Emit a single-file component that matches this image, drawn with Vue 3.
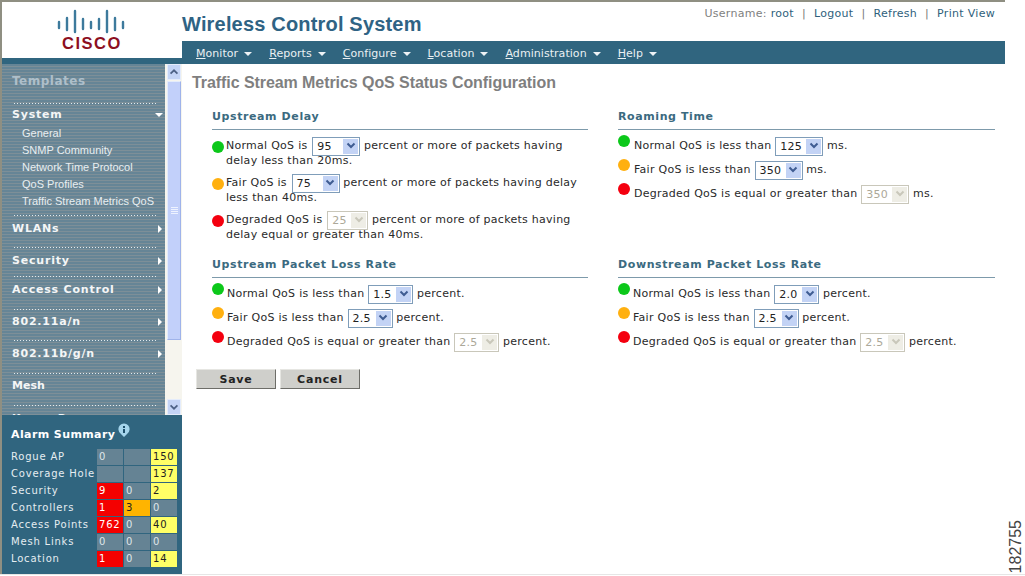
<script setup>
const navItems = ['Monitor', 'Reports', 'Configure', 'Location', 'Administration', 'Help']
const subItems = ['General', 'SNMP Community', 'Network Time Protocol', 'QoS Profiles', 'Traffic Stream Metrics QoS']
const groups = [
  { label: 'WLANs', h: 32, p: 6, arrow: true },
  { label: 'Security', h: 29, p: 6, arrow: true },
  { label: 'Access Control', h: 33, p: 6, arrow: true },
  { label: '802.11a/n', h: 31, p: 5, arrow: true },
  { label: '802.11b/g/n', h: 33, p: 6, arrow: true },
  { label: 'Mesh', h: 32, p: 5, arrow: false, plain: true },
  { label: 'Known Rogues', h: 32, p: 6, arrow: false, plain: true }
]
const alarms = [
  { name: 'Rogue AP', cells: [['0', 'g'], ['', 'g'], ['150', 'y']] },
  { name: 'Coverage Hole', cells: [['', 'g'], ['', 'g'], ['137', 'y']] },
  { name: 'Security', cells: [['9', 'r'], ['0', 'g'], ['2', 'y']] },
  { name: 'Controllers', cells: [['1', 'r'], ['3', 'o'], ['0', 'g']] },
  { name: 'Access Points', cells: [['762', 'r'], ['0', 'g'], ['40', 'y']] },
  { name: 'Mesh Links', cells: [['0', 'g'], ['0', 'g'], ['0', 'g']] },
  { name: 'Location', cells: [['1', 'r'], ['0', 'g'], ['14', 'y']] }
]
const sections = [
  {
    title: 'Upstream Delay', kind: 'wrap', rows: [
      { c: 'green', a: 'Normal QoS is', v: '95', w: 48, b: 'percent or more of packets having', b2: 'delay less than 20ms.' },
      { c: 'amber', a: 'Fair QoS is', v: '75', w: 48, b: 'percent or more of packets having delay', b2: 'less than 40ms.' },
      { c: 'red', a: 'Degraded QoS is', v: '25', w: 41, off: true, b: 'percent or more of packets having', b2: 'delay equal or greater than 40ms.' }
    ]
  },
  {
    title: 'Roaming Time', kind: 'line wide', rows: [
      { c: 'green', a: 'Normal QoS is less than', v: '125', w: 48, b: 'ms.' },
      { c: 'amber', a: 'Fair QoS is less than', v: '350', w: 48, b: 'ms.' },
      { c: 'red', a: 'Degraded QoS is equal or greater than', v: '350', w: 48, off: true, b: 'ms.' }
    ]
  },
  {
    title: 'Upstream Packet Loss Rate', kind: 'line', rows: [
      { c: 'green', a: 'Normal QoS is less than', v: '1.5', w: 45, b: 'percent.' },
      { c: 'amber', a: 'Fair QoS is less than', v: '2.5', w: 45, b: 'percent.' },
      { c: 'red', a: 'Degraded QoS is equal or greater than', v: '2.5', w: 45, off: true, b: 'percent.' }
    ]
  },
  {
    title: 'Downstream Packet Loss Rate', kind: 'line', rows: [
      { c: 'green', a: 'Normal QoS is less than', v: '2.0', w: 45, b: 'percent.' },
      { c: 'amber', a: 'Fair QoS is less than', v: '2.5', w: 45, b: 'percent.' },
      { c: 'red', a: 'Degraded QoS is equal or greater than', v: '2.5', w: 45, off: true, b: 'percent.' }
    ]
  }
]
const logoBars = [
  [59, 22, 28], [67, 18, 30], [75, 11, 32], [83, 19, 29], [91, 22, 28],
  [99, 19, 29], [107, 11, 32], [115, 18, 30], [123, 22, 28]
]
</script>

<template>
  <div class="page">
    <div class="shell">
      <aside class="left">
        <div class="logo">
          <svg class="bars" width="130" height="34" viewBox="0 0 130 34">
            <line v-for="b in logoBars" :key="b[0]" :x1="b[0]" :x2="b[0]" :y1="b[1]" :y2="b[2]" />
          </svg>
          <div class="cisco">CISCO</div>
        </div>
        <div class="strip"></div>
        <div class="side">
          <div class="menu">
            <div class="templates">Templates</div>
            <div class="dots"></div>
            <div class="system">
              <div class="head">System<i class="tri-down"></i></div>
              <div v-for="s in subItems" :key="s" class="sub">{{ s }}</div>
            </div>
            <div v-for="g in groups" :key="g.label" class="group" :style="{ height: g.h + 'px' }">
              <div class="dots"></div>
              <div class="head" :class="{ plain: g.plain }" :style="{ marginTop: g.p + 'px' }">
                {{ g.label }}<i v-if="g.arrow" class="tri-right"></i>
              </div>
            </div>
          </div>
          <div class="scroll">
            <div class="sbtn">
              <svg width="14" height="14" viewBox="0 0 14 14"><path d="M3 9 L7 5 L11 9" /></svg>
            </div>
            <div class="thumb"><span></span><span></span><span></span><span></span></div>
            <div class="track"></div>
            <div class="sbtn">
              <svg width="14" height="14" viewBox="0 0 14 14"><path d="M3 5 L7 9 L11 5" /></svg>
            </div>
          </div>
        </div>
        <div class="alarm">
          <div class="alarm-title">
            Alarm Summary
            <svg class="info" width="14" height="15" viewBox="0 0 14 15">
              <path d="M7 14 L3.5 10.5 A5.6 5.6 0 1 1 10.5 10.5 Z" fill="#a5d5ec" />
              <rect x="6" y="3" width="2" height="2" fill="#1d4f6b" />
              <rect x="6" y="6" width="2" height="4" fill="#1d4f6b" />
            </svg>
          </div>
          <div v-for="a in alarms" :key="a.name" class="alarm-row">
            <span class="alarm-name">{{ a.name }}</span>
            <span v-for="(c, i) in a.cells" :key="i" class="cell" :class="c[1]">{{ c[0] }}</span>
          </div>
        </div>
      </aside>

      <div class="right">
        <div class="top">
          <div class="brand">Wireless Control System</div>
          <div class="links">
            <span class="muted">Username:</span> <a>root</a>
            <b>|</b><a>Logout</a><b>|</b><a>Refresh</a><b>|</b><a>Print View</a>
          </div>
        </div>
        <nav class="nav">
          <span v-for="n in navItems" :key="n" class="nav-item">
            <span><u>{{ n[0] }}</u>{{ n.slice(1) }}</span><i class="tri-down small"></i>
          </span>
        </nav>
        <main class="main">
          <h1>Traffic Stream Metrics QoS Status Configuration</h1>
          <div class="grid">
            <section v-for="s in sections" :key="s.title" :class="s.kind">
              <h2>{{ s.title }}</h2>
              <div class="rows">
                <div v-for="r in s.rows" :key="r.c" class="row">
                  <span class="dot" :class="r.c"></span>
                  <div class="txt">
                    {{ r.a }}
                    <span class="sel" :class="{ off: r.off }" :style="{ width: r.w + 'px' }">
                      <span class="val">{{ r.v }}</span>
                      <span class="arr">
                        <svg width="10" height="8" viewBox="0 0 10 8"><path d="M1.5 1.5 L5 5 L8.5 1.5" /></svg>
                      </span>
                    </span>
                    {{ r.b }}<template v-if="r.b2"><br />{{ r.b2 }}</template>
                  </div>
                </div>
              </div>
            </section>
          </div>
          <div class="actions">
            <button type="button">Save</button>
            <button type="button">Cancel</button>
          </div>
        </main>
      </div>
    </div>
    <div class="foot"></div>
    <div class="figno">182755</div>
  </div>
</template>

<style>
html, body { margin: 0; background: #fff; }
</style>

<style scoped>
.page {
  position: relative;
  width: 1025px;
  height: 576px;
  overflow: hidden;
  background: #fff;
  font-family: "DejaVu Sans", Verdana, sans-serif;
  font-size: 11px;
  color: #2a2a2a;
}
.shell {
  display: flex;
  width: 1005px;
  height: 574px;
  border-top: 2px solid #8f8f82;
  box-sizing: border-box;
}
.foot { height: 1px; background: #e6e6e6; }
.left {
  width: 182px;
  flex: none;
  border-left: 2px solid #8f8f82;
  box-sizing: border-box;
  display: flex;
  flex-direction: column;
}
.logo { height: 56px; position: relative; display: flex; flex-direction: column; align-items: center; }
.bars { position: absolute; left: -2px; top: -2px; }
.bars line { stroke: #3d7a9c; stroke-width: 2.4; stroke-linecap: round; }
.cisco {
  margin-top: 32px;
  font-family: "Liberation Sans", Arial, sans-serif;
  font-weight: 700;
  font-size: 16.5px;
  line-height: 18px;
  letter-spacing: 1.5px;
  color: #8d0f1f;
}
.strip { height: 6px; background: #30657f; }
.side { height: 351px; display: flex; overflow: hidden; }
.menu {
  width: 163px;
  flex: none;
  overflow: hidden;
  background: repeating-linear-gradient(180deg, #668596 0 2px, #7d8f98 2px 3px);
  color: #fff;
  padding: 0 0 0 10px;
  box-sizing: border-box;
}
.templates {
  padding-top: 9px;
  height: 39px;
  font-weight: 700;
  font-size: 12px;
  line-height: 16px;
  letter-spacing: .5px;
  color: #aebfca;
  box-sizing: border-box;
}
.dots {
  height: 1px;
  width: 143px;
  margin-left: 2px;
  background: repeating-linear-gradient(90deg, #e3ebef 0 1px, transparent 1px 3px);
}
.system { height: 111px; padding-top: 4px; box-sizing: border-box; }
.head {
  position: relative;
  height: 14px;
  line-height: 14px;
  font-weight: 700;
  font-size: 11px;
  letter-spacing: .8px;
  color: #f4f6f7;
}
.head.plain { letter-spacing: 0; }
.sub {
  margin-left: 10px;
  height: 17px;
  line-height: 17px;
  font-family: "Liberation Sans", Arial, sans-serif;
  font-size: 11px;
  color: #e8eef1;
  white-space: nowrap;
}
.system .head { margin-bottom: 3px; }
.tri-right {
  position: absolute;
  left: 146px;
  top: 3px;
  border-left: 4px solid #fff;
  border-top: 4px solid transparent;
  border-bottom: 4px solid transparent;
}
.tri-down {
  position: absolute;
  left: 143px;
  top: 5px;
  border-top: 4px solid #fff;
  border-left: 4px solid transparent;
  border-right: 4px solid transparent;
}
.tri-down.small {
  position: static;
  display: inline-block;
  margin-left: 6px;
  vertical-align: 1px;
  border-top-color: #eef3f6;
}
.scroll {
  width: 17px;
  flex: none;
  padding: 0 1px 0 2px;
  box-sizing: border-box;
  display: flex;
  flex-direction: column;
  background: #f6f5ee;
}
.sbtn {
  height: 16px;
  background: #c4d4f6;
  border: 1px solid #e4ecfb;
  box-sizing: border-box;
  display: flex;
  align-items: center;
  justify-content: center;
}
.sbtn path { fill: none; stroke: #4d6185; stroke-width: 2; }
.thumb {
  height: 259px;
  margin-top: 1px;
  background: #c2d0fa;
  border: 1px solid #9fb3ea;
  border-top-color: #e4ecfb;
  border-left-color: #e4ecfb;
  box-sizing: border-box;
  display: flex;
  flex-direction: column;
  justify-content: center;
  align-items: center;
  gap: 1px;
}
.thumb span { width: 7px; height: 1px; background: #eef3ff; }
.track { flex: 1; }
.alarm {
  height: 159px;
  background: #30657f;
  padding: 11px 0 0 9px;
  box-sizing: border-box;
  width: 180px;
}
.alarm-title {
  position: relative;
  height: 23px;
  line-height: 18px;
  font-weight: 700;
  font-size: 11px;
  letter-spacing: .4px;
  color: #fff;
}
.info { position: absolute; left: 106px; top: -3px; }
.alarm-row { display: flex; height: 17px; gap: 1px; }
.alarm-name {
  width: 85px;
  line-height: 16px;
  font-size: 10px;
  letter-spacing: .8px;
  color: #e6edf1;
  white-space: nowrap;
}
.cell {
  width: 26px;
  height: 16px;
  line-height: 16px;
  padding-left: 2px;
  box-sizing: border-box;
  font-size: 10px;
  letter-spacing: .8px;
}
.cell.g { background: #658394; color: #dfe6ea; }
.cell.r { background: #f40000; color: #fff; }
.cell.y { background: #ffff66; color: #222; }
.cell.o { background: #ffb400; color: #222; }

.right { flex: 1; display: flex; flex-direction: column; min-width: 0; }
.top { height: 39px; display: flex; justify-content: space-between; }
.brand {
  font-family: "Liberation Sans", Arial, sans-serif;
  font-weight: 700;
  font-size: 20px;
  letter-spacing: .18px;
  line-height: 24px;
  padding-top: 10px;
  color: #2f6384;
}
.links {
  padding: 5px 10px 0 0;
  line-height: 14px;
  letter-spacing: .3px;
  color: #2f5f7c;
  white-space: nowrap;
}
.links .muted { color: #7f7f7f; }
.links b { font-weight: 400; color: #777; margin: 0 8px; }
.nav {
  height: 23px;
  background: #30657f;
  display: flex;
  padding: 1px 0 0 14px;
  box-sizing: border-box;
  align-items: center;
  color: #eaf0f3;
  letter-spacing: .05px;
}
.nav-item { margin-right: 17px; white-space: nowrap; }
.main { flex: 1; padding: 10px 0 0 10px; }
h1 {
  margin: 0;
  font-family: "Liberation Sans", Arial, sans-serif;
  font-size: 16px;
  line-height: 18px;
  font-weight: 700;
  letter-spacing: -.07px;
  color: #7f7f7f;
}
.grid {
  margin: 16px 10px 0 20px;
  display: grid;
  grid-template-columns: 376px 377px;
  column-gap: 30px;
  row-gap: 14px;
}
section { min-width: 0; }
h2 {
  margin: 0;
  line-height: 18px;
  box-sizing: border-box;
  border-bottom: 1px solid #7d9aab;
  height: 22px;
  font-size: 11px;
  font-weight: 700;
  letter-spacing: .6px;
  color: #3b6a80;
}
.rows { display: flex; flex-direction: column; }
.row { display: flex; letter-spacing: .27px; }
.dot { width: 12px; height: 12px; border-radius: 50%; flex: none; }
.dot.green { background: #0cc81a; }
.dot.amber { background: #ffb010; }
.dot.red { background: #f4000f; }
.wrap .rows { margin-top: 8px; gap: 7px; }
.wrap .row { line-height: 15px; }
.wrap .dot { margin: 3px 2px 0 0; }
.wrap .sel { margin-left: 1px; }
.line .rows { margin-top: 4px; }
.line .row { height: 24px; line-height: 24px; }
.line .dot { margin: 1px 3px 0 0; }
.line.wide .dot { margin-right: 4px; }
.txt { flex: 1; min-width: 0; white-space: nowrap; }
.sel {
  display: inline-flex;
  height: 19px;
  margin: -3px 0;
  vertical-align: middle;
  border: 1px solid #7f9db9;
  background: #fff;
  box-sizing: border-box;
  line-height: 15px;
  justify-content: space-between;
  padding: 1px;
}
.val { padding-left: 3px; color: #222; }
.arr {
  width: 15px;
  background: #c3d3f5;
  display: flex;
  align-items: center;
  justify-content: center;
}
.arr path { fill: none; stroke: #3f5c92; stroke-width: 2; }
.sel.off { border-color: #c9c7ba; }
.sel.off .val { color: #aca899; }
.sel.off .arr { background: #eeede5; }
.sel.off .arr path { stroke: #c9c7ba; }
.actions { margin: 15px 0 0 4px; display: flex; gap: 4px; }
button {
  width: 80px;
  height: 20px;
  padding: 0;
  background: #cfcfcb;
  border: 1px solid;
  border-color: #e6e6e2 #6d6d68 #6d6d68 #e6e6e2;
  font-family: "DejaVu Sans", Verdana, sans-serif;
  font-size: 11px;
  font-weight: 700;
  letter-spacing: .8px;
  color: #222;
}
.figno {
  position: absolute;
  right: 1px;
  bottom: 3px;
  writing-mode: vertical-rl;
  transform: rotate(180deg);
  font-family: "Liberation Sans", Arial, sans-serif;
  font-size: 16px;
  line-height: 16px;
  color: #444;
}
</style>
